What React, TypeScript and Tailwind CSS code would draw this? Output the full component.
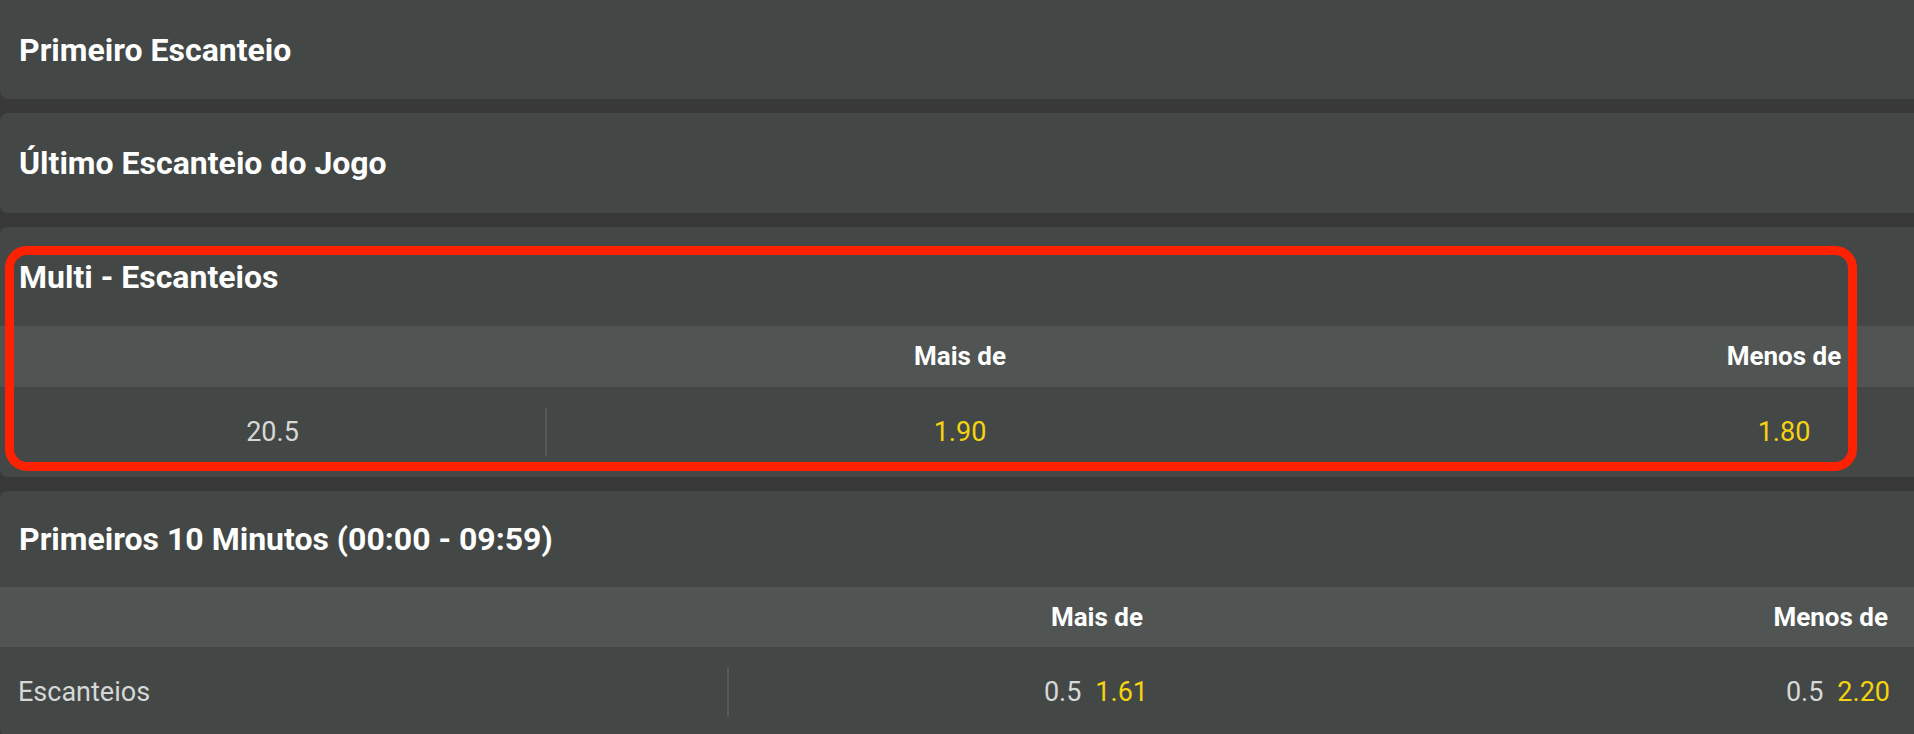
import React from 'react'

const gold = 'text-[#f4d30f]'

function Titulo({ texto, altura }: { texto: string; altura: string }) {
  return (
    <div className={`${altura} flex items-center pl-[19px] text-[32px] font-bold text-white`}>
      {texto}
    </div>
  )
}

function Divisor() {
  return <div className="w-[2px] h-[48px] bg-[#555a59]" />
}

export default function App() {
  return (
    <div className="relative w-[1914px] h-[734px] overflow-hidden bg-[#393939] font-['Roboto','Liberation_Sans',sans-serif]">
      <div className="flex flex-col gap-[14px]">
        {/* Primeiro Escanteio */}
        <div className="bg-[#434746] rounded-bl-lg">
          <Titulo texto="Primeiro Escanteio" altura="h-[99px]" />
        </div>

        {/* Último Escanteio */}
        <div className="bg-[#434746] rounded-l-lg">
          <Titulo texto="Último Escanteio do Jogo" altura="h-[100px]" />
        </div>

        {/* Multi - Escanteios */}
        <div className="bg-[#434746] rounded-l-lg">
          <Titulo texto="Multi - Escanteios" altura="h-[99px]" />
          <div className="h-[61px] bg-[#505453] grid grid-cols-[547px_826px_1fr_260px] items-center text-[26px] font-bold text-white">
            <div />
            <div className="text-center">Mais de</div>
            <div />
            <div className="text-center">Menos de</div>
          </div>
          <div className="h-[90px] grid grid-cols-[547px_826px_1fr_260px] items-center text-[27px]">
            <div className="flex items-center">
              <div className="flex-1 text-center text-[#d6d8d7]">20.5</div>
              <Divisor />
            </div>
            <div className={`text-center ${gold}`}>1.90</div>
            <div />
            <div className={`text-center ${gold}`}>1.80</div>
          </div>
        </div>

        {/* Primeiros 10 Minutos */}
        <div className="bg-[#434746] rounded-l-lg">
          <Titulo texto="Primeiros 10 Minutos (00:00 - 09:59)" altura="h-[96px]" />
          <div className="h-[60px] bg-[#505453] grid grid-cols-[729px_443px_1fr] items-center text-[26px] font-bold text-white">
            <div />
            <div className="text-right pr-[29px]">Mais de</div>
            <div className="text-right pr-[26px]">Menos de</div>
          </div>
          <div className="h-[90px] grid grid-cols-[729px_443px_1fr] items-center text-[27px]">
            <div className="flex items-center">
              <div className="flex-1 pl-[18px] text-[#d6d8d7]">Escanteios</div>
              <Divisor />
            </div>
            <div className="flex justify-end gap-[14px] pr-[24px]">
              <span className="text-[#d6d8d7]">0.5</span>
              <span className={gold}>1.61</span>
            </div>
            <div className="flex justify-end gap-[14px] pr-[24px]">
              <span className="text-[#d6d8d7]">0.5</span>
              <span className={gold}>2.20</span>
            </div>
          </div>
        </div>
      </div>

      {/* destaque vermelho */}
      <div className="absolute left-[5px] top-[246px] w-[1852px] h-[225px] border-[9px] border-[#ff2200] rounded-[22px] pointer-events-none" />
    </div>
  )
}
